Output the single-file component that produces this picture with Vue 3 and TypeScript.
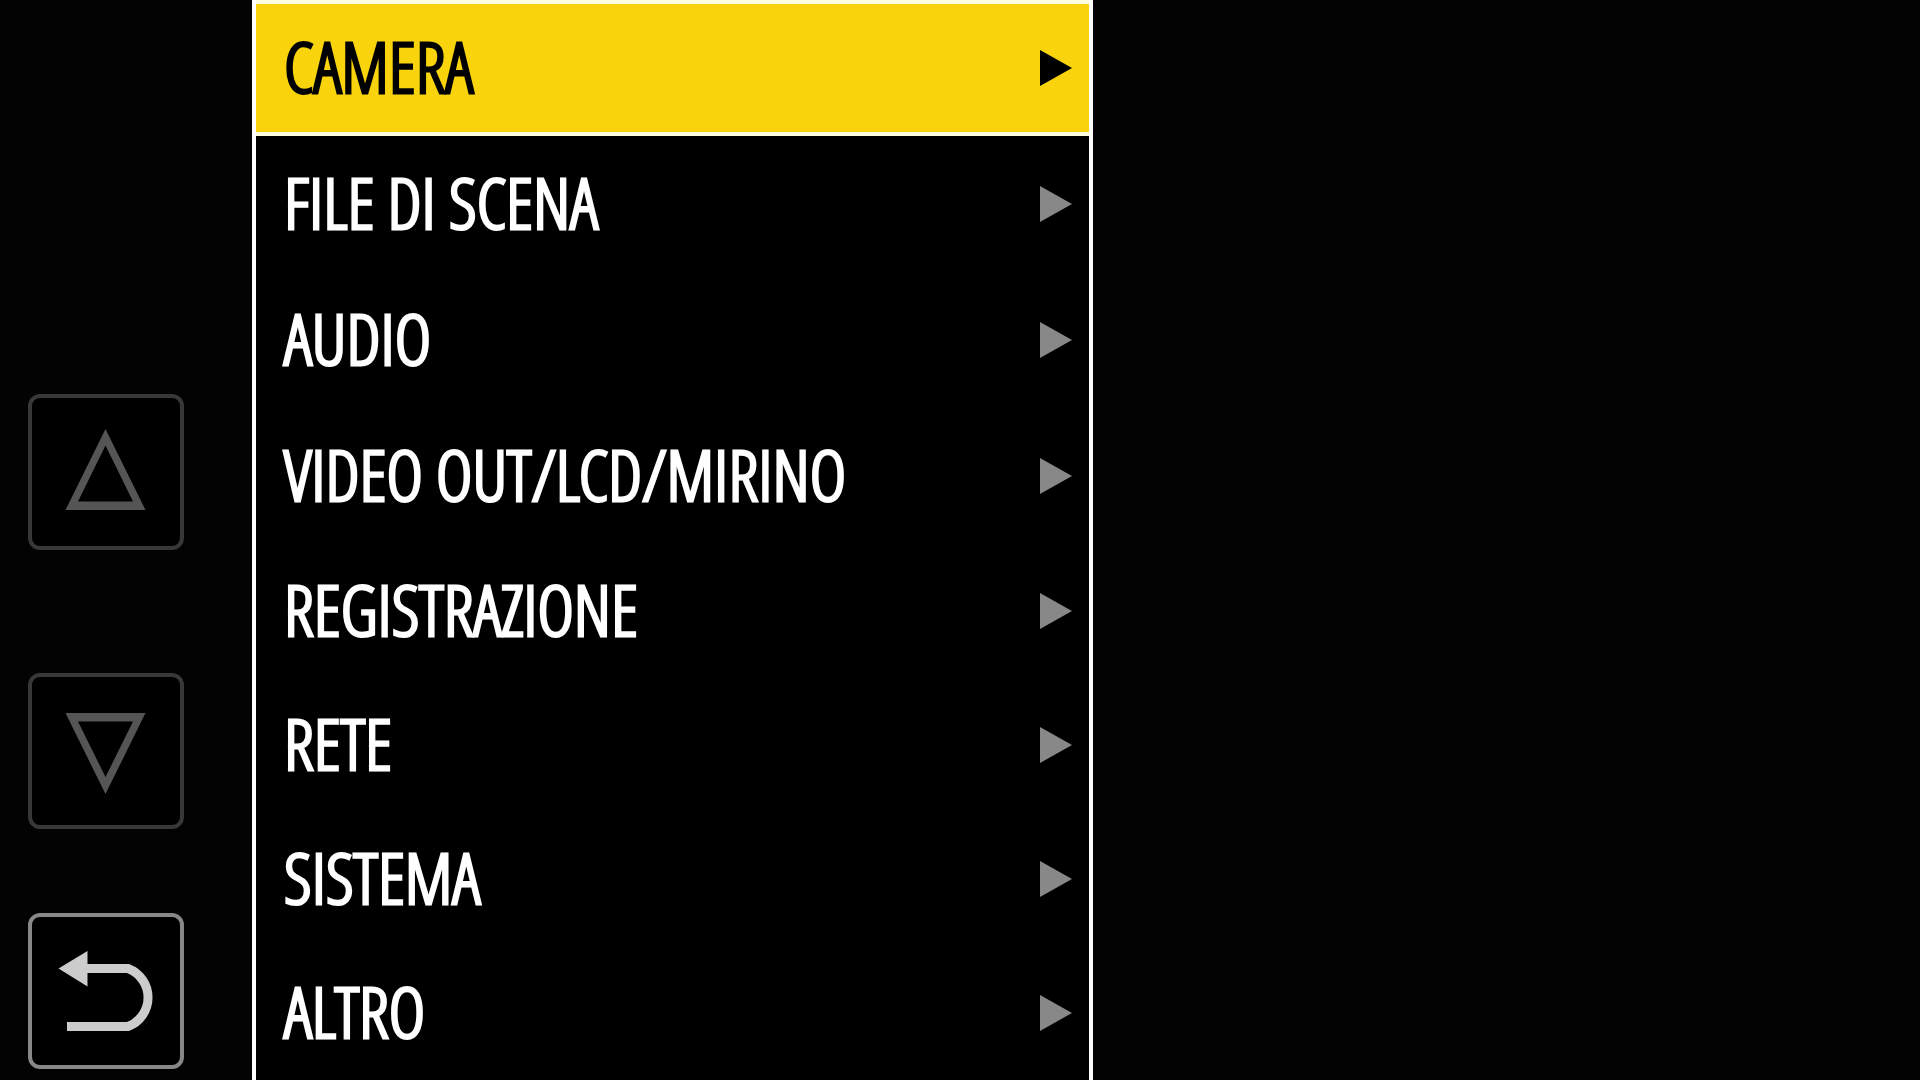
<script setup lang="ts">
import { ref } from 'vue'

const entries: string[] = [
  'CAMERA',
  'FILE DI SCENA',
  'AUDIO',
  'VIDEO OUT/LCD/MIRINO',
  'REGISTRAZIONE',
  'RETE',
  'SISTEMA',
  'ALTRO',
]
const selected = ref(0)

function move(step: number) {
  selected.value = Math.min(entries.length - 1, Math.max(0, selected.value + step))
}
</script>

<template>
  <main class="screen">
    <aside class="rail">
      <button class="key" type="button" aria-label="Su" @click="move(-1)">
        <svg viewBox="4 4 148 148" aria-hidden="true">
          <path fill-rule="evenodd" d="M77.5 35 117.5 116H37.5ZM77.5 51.5 50 107.5H105Z" />
        </svg>
      </button>
      <button class="key" type="button" aria-label="Giù" @click="move(1)">
        <svg viewBox="4 4 148 148" aria-hidden="true">
          <path fill-rule="evenodd" d="M77.5 121 117.5 40H37.5ZM77.5 104 50 48.5H105Z" />
        </svg>
      </button>
      <button class="key back" type="button" aria-label="Indietro" @click="selected = 0">
        <svg viewBox="4 4 148 148" aria-hidden="true">
          <path d="M30.5 55.5 59.5 38V73.5Z" />
          <path class="line" d="M58 55.5H100A31 31 0 0 1 100 113.5H39" />
        </svg>
      </button>
    </aside>

    <nav class="menu">
      <button
        v-for="(entry, index) in entries"
        :key="entry"
        type="button"
        class="entry"
        :class="{ active: index === selected }"
        @click="selected = index"
      >
        <span>{{ entry }}</span>
        <svg class="arrow" viewBox="0 0 32 36" aria-hidden="true">
          <path d="M0 0 32 18 0 36Z" />
        </svg>
      </button>
    </nav>
  </main>
</template>

<style>
body {
  background: #030303;
}
</style>

<style scoped>
.screen {
  display: grid;
  grid-template-columns: 252px minmax(0, 841fr) minmax(0, 827fr);
  min-height: 100vh;
  background: #030303;
}

.rail {
  display: flex;
  flex-direction: column;
  justify-content: flex-end;
  padding: 0 0 11px 28px;
}

.key {
  box-sizing: border-box;
  width: 156px;
  height: 156px;
  margin: 0 0 123px;
  padding: 0;
  border: 4px solid #383838;
  border-radius: 12px;
  background: #000;
  color: #555;
  cursor: pointer;
}

.key + .key {
  margin-bottom: 84px;
}

.key.back {
  margin-bottom: 0;
  border-color: #888;
  color: #ccc;
}

.key svg {
  display: block;
  width: 100%;
  height: 100%;
  fill: currentColor;
}

.key .line {
  fill: none;
  stroke: currentColor;
  stroke-width: 9;
}

.menu {
  display: grid;
  grid-template-rows: repeat(4, 136px) repeat(4, 134px);
  border: solid #fff;
  border-width: 0 4px;
  background: #000;
}

.entry {
  display: flex;
  align-items: center;
  justify-content: space-between;
  margin: 0;
  padding: 0 17px 4px 28px;
  border: solid transparent;
  border-width: 4px 0;
  background: #000;
  color: #fff;
  font-family: "Open Sans Condensed Light", "Open Sans Condensed", sans-serif;
  font-size: 70px;
  font-weight: 400;
  line-height: 72px;
  white-space: nowrap;
  cursor: pointer;
  -webkit-text-stroke: 3px currentColor;
}

.entry.active {
  border-color: #fffde0;
  background: #f9d30b;
  color: #000;
}

.arrow {
  flex: none;
  width: 32px;
  height: 36px;
  margin-top: 4px;
  fill: #888;
}

.active .arrow {
  fill: #000;
}
</style>
